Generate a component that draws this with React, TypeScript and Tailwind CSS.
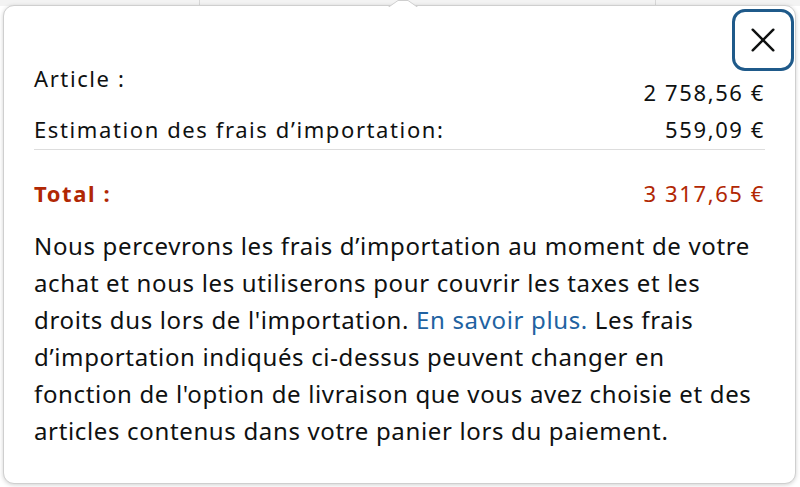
import React from "react";

function CloseIcon() {
  return (
    <svg viewBox="0 0 24 24" className="size-[26px]" fill="none" stroke="#0f1111" strokeWidth="2.3" strokeLinecap="round">
      <path d="M2.5 2.5L21.5 21.5" />
      <path d="M21.5 2.5L2.5 21.5" />
    </svg>
  );
}

export default function App() {
  return (
    <div
      className="relative h-[487px] w-[800px] overflow-hidden bg-white text-[#0f1111]"
      style={{ fontFamily: '"Noto Sans", "Open Sans", Arial, sans-serif' }}
    >
      {/* page behind the popover */}
      <div className="absolute inset-x-0 top-0 flex h-[6px] bg-[#f3f3f3]">
        <div className="w-[200px] border-r border-[#d8d8d8]" />
        <div className="w-[456px] border-r border-[#d8d8d8]" />
      </div>

      <div className="relative ml-[3px] mr-[4px] mt-[5px] h-[479px] rounded-[11px] border border-[#cfcfcf] bg-white px-[30px] pt-[54px] shadow-[0_1px_4px_rgba(0,0,0,0.18)]">
        <svg className="absolute left-[384px] top-[-6px]" width="30" height="8" viewBox="0 0 30 8">
          <path d="M0 7.5L10 0.5L20 0.5L30 7.5" fill="white" stroke="#cfcfcf" />
          <rect x="0" y="7" width="30" height="2" fill="white" />
        </svg>

        <button
          type="button"
          className="absolute right-[1px] top-[3px] flex h-[62px] w-[62px] items-center justify-center rounded-[13px] border-[3px] border-[#1f5a8a] bg-white"
        >
          <CloseIcon />
        </button>

        <div className="flex items-start justify-between text-[22px] leading-[37px] tracking-[1.6px]">
          <span>Article :</span>
          <span className="mt-[14px]">2{"\u00A0"}758,56 €</span>
        </div>
        <div className="flex items-start justify-between border-b border-[#dddddd] pb-[1px] text-[22px] leading-[37px] tracking-[1.6px]">
          <span>Estimation des frais d’importation:</span>
          <span>559,09 €</span>
        </div>
        <div className="mt-[25px] flex items-start justify-between text-[22px] leading-[37px] tracking-[1.6px] text-[#b12704]">
          <span className="font-bold">Total :</span>
          <span>3{"\u00A0"}317,65 €</span>
        </div>
        <p className="mt-[15px] text-[24px] leading-[37px] tracking-[0.65px]">
          Nous percevrons les frais d’importation au moment de votre achat et nous les utiliserons pour couvrir les taxes
          et les droits dus lors de l'importation. <span className="text-[#2162a1]">En savoir plus.</span> Les frais
          d’importation indiqués ci-dessus peuvent changer en fonction de l'option de livraison que vous avez choisie et
          des articles contenus dans votre panier lors du paiement.
        </p>
      </div>
    </div>
  );
}
